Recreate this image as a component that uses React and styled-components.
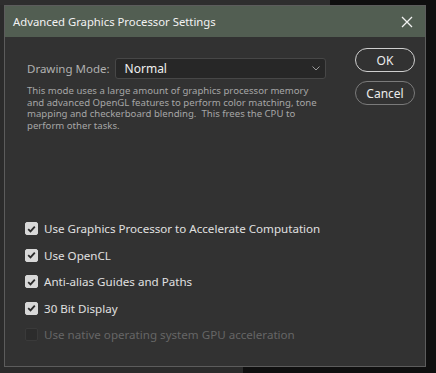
import styled, { createGlobalStyle } from "styled-components";

const GlobalStyle = createGlobalStyle`
  html, body {
    margin: 0;
    padding: 0;
  }
  body {
    width: 436px;
    height: 373px;
    overflow: hidden;
    background:
      linear-gradient(#2e2e2e, #2e2e2e) 0 0 / 330px 5px no-repeat,
      linear-gradient(#2b2b2b, #2b2b2b) 0 0 / 4px 373px no-repeat,
      linear-gradient(#2b2b2b, #2b2b2b) 0 366px / 243px 7px no-repeat,
      #0f0f0f;
    font-family: "Noto Sans", "Open Sans", sans-serif;
  }
`;

const Backdrop = styled.div`
  padding: 5px 0 0 4px;
`;

const Dialog = styled.div`
  width: 420px;
  height: 360px;
  border: 1px solid #5c5c5c;
  background: #323232;
  display: flex;
  flex-direction: column;
`;

const TitleBar = styled.div`
  height: 31px;
  background: #525e52;
  display: flex;
  align-items: center;
  justify-content: space-between;
  padding: 0 12px 0 8px;
  color: #f2f2f2;
  font-size: 11.3px;
`;

const CloseButton = styled.div`
  width: 12px;
  height: 12px;
  display: flex;
`;

const Body = styled.div`
  flex: 1;
  display: flex;
  padding: 11px 10px 0 20px;
`;

const Main = styled.div`
  flex: 1;
  display: flex;
  flex-direction: column;
`;

const ModeRow = styled.div`
  display: flex;
  align-items: center;
  margin: 10px 0 0 2px;
  gap: 5px;
`;

const Label = styled.span`
  color: #b0b0b0;
  font-size: 11.5px;
`;

const Select = styled.div`
  width: 211px;
  height: 21px;
  box-sizing: border-box;
  border: 1px solid #474747;
  border-radius: 3px;
  background: #272727;
  display: flex;
  align-items: center;
  justify-content: space-between;
  padding: 0 5px 0 9px;
  color: #f0f0f0;
  font-size: 12px;
`;

const Description = styled.p`
  margin: 6px 0 0 2px;
  width: 300px;
  color: #a6a6a6;
  font-size: 9.6px;
  line-height: 11.7px;
`;

const Options = styled.div`
  margin-top: 89px;
  display: flex;
  flex-direction: column;
  gap: 10.5px;
`;

const OptionRow = styled.label`
  display: flex;
  align-items: center;
  gap: 6px;
  height: 16px;
  font-size: 11.6px;
  color: ${(p) => (p.$disabled ? "#666666" : "#e0e0e0")};
`;

const Box = styled.span`
  width: 13px;
  height: 13px;
  box-sizing: border-box;
  border-radius: 2px;
  display: flex;
  align-items: center;
  justify-content: center;
  background: ${(p) => (p.$disabled ? "#2c2c2c" : "#d8d8d8")};
  border: 1px solid ${(p) => (p.$disabled ? "#3a3a3a" : "#d8d8d8")};
`;

const Buttons = styled.div`
  display: flex;
  flex-direction: column;
  gap: 9px;
`;

const Button = styled.div`
  width: 60px;
  height: 24px;
  box-sizing: border-box;
  border-radius: 12px;
  border: ${(p) => (p.$primary ? "1.5px solid #cfcfcf" : "1px solid #7a7a7a")};
  display: flex;
  align-items: center;
  justify-content: center;
  color: #ececec;
  font-size: 12px;
`;

function Check() {
  return (
    <svg width="9" height="8" viewBox="0 0 9 8">
      <path d="M1.2 4.2 L3.5 6.4 L7.8 1.6" fill="none" stroke="#2a2a2a" strokeWidth="1.8" />
    </svg>
  );
}

const options = [
  { text: "Use Graphics Processor to Accelerate Computation", checked: true },
  { text: "Use OpenCL", checked: true },
  { text: "Anti-alias Guides and Paths", checked: true },
  { text: "30 Bit Display", checked: true },
  { text: "Use native operating system GPU acceleration", disabled: true },
];

export default function App() {
  return (
    <>
      <GlobalStyle />
      <Backdrop>
        <Dialog>
          <TitleBar>
            <span>Advanced Graphics Processor Settings</span>
            <CloseButton>
              <svg width="12" height="12" viewBox="0 0 12 12">
                <path d="M1 1 L11 11 M11 1 L1 11" stroke="#f2f2f2" strokeWidth="1.3" />
              </svg>
            </CloseButton>
          </TitleBar>
          <Body>
            <Main>
              <ModeRow>
                <Label>Drawing Mode:</Label>
                <Select>
                  <span>Normal</span>
                  <svg width="8" height="5" viewBox="0 0 8 5">
                    <path d="M0.5 0.5 L4 4 L7.5 0.5" fill="none" stroke="#9a9a9a" strokeWidth="1" />
                  </svg>
                </Select>
              </ModeRow>
              <Description>
                This mode uses a large amount of graphics processor memory and advanced OpenGL
                features to perform color matching, tone mapping and checkerboard blending.&nbsp; This
                frees the CPU to perform other tasks.
              </Description>
              <Options>
                {options.map((o) => (
                  <OptionRow key={o.text} $disabled={o.disabled}>
                    <Box $disabled={o.disabled}>{o.checked && <Check />}</Box>
                    <span>{o.text}</span>
                  </OptionRow>
                ))}
              </Options>
            </Main>
            <Buttons>
              <Button $primary>OK</Button>
              <Button>Cancel</Button>
            </Buttons>
          </Body>
        </Dialog>
      </Backdrop>
    </>
  );
}
